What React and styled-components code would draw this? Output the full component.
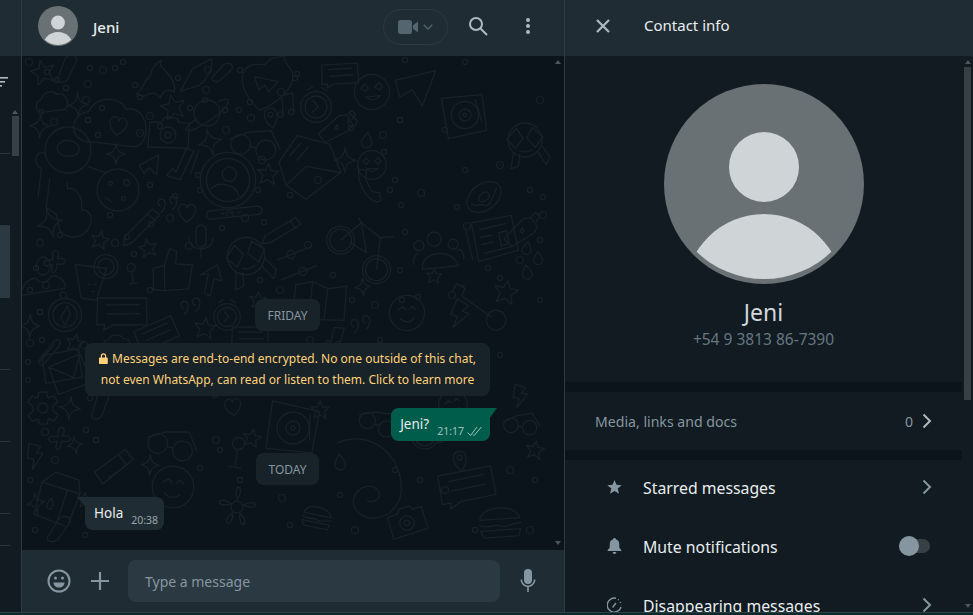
import React from 'react';
import styled, { createGlobalStyle } from 'styled-components';

const GlobalStyle = createGlobalStyle`
  html, body { margin: 0; padding: 0; background: #111b21; }
  body { font-family: "Noto Sans", "Open Sans", sans-serif; overflow: hidden; }
  * { box-sizing: border-box; }
`;

const doodleShapes = {
  star: <path d="M0-15 4-5 15-5 7 3 10 14 0 8-10 14-7 3-15-5-4-5Z" />,
  sparkle: <path d="M0-15C1-5 4-2 13 0 4 2 1 5 0 15-1 5-4 2-13 0-4-2-1-5 0-15Z" />,
  heart: <path d="M0 14C-22-2-12-16-4-13-2-12 0-10 0-8 0-10 2-12 4-13 12-16 22-2 0 14Z" />,
  wheart: <g><path d="M0 26C-30 8-28-14-14-18-8-20-4-18-2-24 4-32 8-28 14-34 12-26 20-24 24-18 30-6 20 12 0 26Z" /><path d="M-12-6H12L5 6 0 0-5 6Z" /></g>,
  drop: <path d="M0-13C6-4 9 0 9 4A9 9 0 0 1-9 4C-9 0-6-4 0-13Z" />,
  planet: <g><circle r="13" /><path d="M-11 5C-22 11-24 15-21 16-16 18 18 2 22-9 23-13 18-13 12-10" /></g>,
  camera: <g><path d="M-20-10-8-12-6-17 6-18 9-14 19-15 22 10-18 15Z" /><circle r="8" /><circle r="3" /></g>,
  clock: <g><circle r="14" /><circle r="10" /><path d="M-3-6 2 0-3 5" /><path d="M-9-15-4-18M9-15 4-18" /></g>,
  envelope: <g><path d="M-28-4-4-26 26-10 30 20-10 38-26 20Z" /><path d="M-26 20-2 6 30 20M-16-8-2-18M-10-2 4-12" /></g>,
  mail: <g><path d="M-22-16 14-20 17 8-20 12Z" /><path d="M-16-4 16-15 26 14-8 24ZM-16-4 8 8 16-15" /></g>,
  face: <g><circle r="16" /><path d="M-8-3-4-6-1-3M2-3 5-6 8-3M-6 5C-3 9 3 9 6 5" /></g>,
  hearteyes: <g><circle r="16" /><path d="M-10-4-6-8-3-4-6-1ZM3-4 7-8 10-4 7-1ZM-6 4C-2 8 3 8 7 4Z" /></g>,
  avatar: <g><circle r="23" /><circle r="18" /><circle cy="-5" r="6" /><path d="M-12 11C-8 2 8 2 12 11" /></g>,
  glasses: <g><circle cx="-11" cy="-2" r="9" /><circle cx="11" cy="6" r="9" /><path d="M-20-8-3-12 18-11 24 7M-3 1 3 3" /></g>,
  card: <g><path d="M-24-10 20-17 24 7-6 12-14 18-14 13-21 14Z" /><path d="M-15-5 14-10M-13 3 16-2" /></g>,
  cloud: <path d="M-14 8C-22 6-20-4-13-5-10-13 1-12 3-7 12-10 16 6 8 9Z" />,
  pin: <g><path d="M0 14C-12 2-9-11 0-11 9-11 12 2 0 14Z" /><circle cy="-3" r="3" /></g>,
  note: <g><path d="M-6 10V-11L6-13V8" /><circle cx="-9" cy="10" r="3" /><circle cx="3" cy="8" r="3" /></g>,
  bottle: <g><path d="M-13 22-22 14-3-10 5-12 14-3 10 5Z" /><path d="M5-12 10-18 15-15 12-8" /><path d="M-5 4-3 0-1 4-3 6Z" /></g>,
  check: <g><path d="M-18 8-11 2-8 6 6-16 13-12-5 14Z" /><path d="M6 10 18-12" /></g>,
  plane: <path d="M-12 0 10-11 7 11-1 3-7 9Z" />,
  flower: <g><path d="M0-6C-6-20 6-20 0-6M5-2C17-10 20 3 5-2M3 5C14 15 2 19 3 5M-3 5C-14 15-2 19-3 5M-5-2C-17-10-20 3-5-2" /><circle r="5" /></g>,
  bike: <g><circle cx="-20" cy="0" r="14" /><circle cx="-20" cy="0" r="11" /><circle cx="22" cy="20" r="14" /><circle cx="22" cy="20" r="11" /><path d="M-20 0-4-22-8-26M-4-22 18-12 22 20M-4-22 8 6-10 0M18-12 30-16" /></g>,
  milk: <g><path d="M-16-8-6-20 16-18 20-6 16 26-16 22Z" /><path d="M-16-8 20-6M8-6 6 24" /><path d="M-4 4C-8 10-7 14-4 14-1 14 0 10-4 4Z" /></g>,
  gear: <g><path d="M-4-16H4L5-10 11-12 15-6 10-2V3L15 7 11 13 5 11 4 16H-4L-5 11-11 13-15 7-10 3V-2L-15-6-11-12-5-10Z" /><circle r="5" /></g>,
  compass: <g><circle r="15" /><circle r="11" /><circle cy="-18" r="3" /><path d="M3-8-4 2-1 9 5 0Z" /></g>,
  news: <g><path d="M-22-17 18-23 24 12-16 22Z" /><path d="M-14-10 12-15M-13-2-2-4M-12 5-1 3M5-6 13-8 15 5 7 7ZM-10 14 18 8M-28-10-22 20" /></g>,
  record: <g><path d="M-24-24 24-20 22 22-24 24Z" /><circle r="16" /><circle r="7" /><circle r="2" /><path d="M15-16 18 10" /></g>,
  roll: <g><path d="M-20 6 16-16 24-4-12 20Z" /><path d="M8-11 16 1M-4 13 5 8" /></g>,
  burger: <g><path d="M-20-3C-18-18 16-18 20-3Z" /><path d="M-21 2C-12 7-6 1 0 4 8 7 14 1 21 2M-20 8H20L18 15H-17Z" /></g>,
  pen: <g><path d="M-16 8 12-14 18-8-10 14-18 16Z" /><path d="M7-10 14-3" /></g>,
  capsule: <path d="M-14 10-4-8C0-14 8-12 8-6L-4 12C-8 16-16 14-14 10Z" />,
  thumb: <g><path d="M-12-2-4-4 0-16 5-14 4-5 16-4 13 13-4 14-12 13Z" /><path d="M-4-4V14" /></g>,
  phone: <path d="M-10-16-3-14-5-6-1 6 6 8 6 15C-2 20-14 0-10-16Z" />,
  swirl: <path d="M-16-26C6-30 24-10 18 14 14 30-6 34-14 22-20 10-4 2 2 10 6 16-2 20-6 16" />,
  mic: <g><path d="M-5-10A5 5 0 0 1 5-10V2A5 5 0 0 1-5 2Z" /><path d="M-12-1C-11 12 11 12 12-1M0 9V17" /></g>,
  hands: <g><circle r="17" /><path d="M-18-2-8-12-2-2-10 8ZM18-2 8-12 2-2 10 8ZM-6 10C0 14 6 10 6 10M-12 12-16 28-8 26-6 14M12 12 20 26 24 18 16 6" /></g>,
  band: <g><path d="M-26 4 20-8C26-9 28-2 22 0L-24 12C-29 13-30 6-26 4Z" /><path d="M-14 5-11 4M-6 3-3 2M2 1 5 0" /></g>,
  sliders: <g><path d="M-18-6 18-16M-16 14 20 4" /><circle cx="-4" cy="-10" r="4" /><circle cx="6" cy="8" r="4" /></g>,
  people: <g><path d="M-16 16C-16-2 16-2 20 18Z" /><circle cy="-12" r="7" /><circle cx="-16" cy="-8" r="5" /><circle cx="18" cy="-4" r="5" /><path d="M-24 10C-24 2-20 0-18 0M26 12C28 4 24 2 22 2" /></g>,
  donut: <g><ellipse rx="19" ry="13" transform="rotate(-25)" /><ellipse rx="6" ry="4" transform="rotate(-25)" /><path d="M-14 4C-8 10-6 4-2 8 4 12 8 2 14-6" /></g>,
  guitar: <g><path d="M-20-16-14-22-8-16-12-10 10 14" /><circle cx="14" cy="18" r="9" /><path d="M-12-20-8-18" /></g>,
  map: <g><path d="M-24-8-8-14 8-10 26-16 30 18-6 24-22 22Z" /><path d="M-8-14-6 24M8-10 10 20" /></g>,
  drink: <g><path d="M-15-16 14-4-4 24-18 18Z" /><circle cx="14" cy="-6" r="12" /><circle cx="14" cy="-6" r="8" /><path d="M-8 6-6 7M-2 8 0 9M-6 14-4 15" /></g>,
  person: <g><ellipse cy="-14" rx="7" ry="9" /><path d="M-22 16C-20 2-14 0-8-2-2 4 4 4 8-4 16-6 24 2 22 8Z" /></g>,
  arrow: <path d="M-4 16-2-4-10-2 6-14 12 2 4 0 2 18Z" />,
  helmet: <g><circle r="23" /><path d="M-11-2C-10-12 10-12 11-2 12 8-12 10-11-2Z" /><path d="M-23 6C-32 4-34 18-24 22V50M22 14 40 18" /></g>,
  glove: <path d="M-20-20-18 6-8 10-2 24C8 32 22 26 24 14 26 4 18 0 14 2 12-14 2-18-2-14L-4-20" />,
  cookie: <g><circle r="21" /><circle cx="-8" cy="-6" r="2" /><circle cx="8" cy="-8" r="3" /><circle cx="6" cy="8" r="2" /><path d="M-12 8-6 12" /></g>,
  quote: <path d="M-7 3C-11 0-8-6-4-4 0-2-2 6-7 9M5 1C1-2 4-8 8-6 12-4 10 4 5 7" />,
  bolt: <path d="M-4-14 8-8 2-2 9 0-6 15-2 4-9 2Z" />,
  clip: <path d="M-15 10 10-12C16-15 20-9 15-5L-8 14C-12 16-15 13-12 10L10-8" />,
  flame: <path d="M-22 14C-14 8-14 0-8-4-6-10-4-16 4-20 0-14 6-12 10-6 14-2 18 6 16 12 8 8 4 12 2 18-2 12-8 12-14 16Z" />,
  kite: <path d="M-14 18-4-6 14-18C16-10 12 4 4 10Z" />,
  cross: <path d="M-2-14C2-16 3-10 2-5 8-8 14-4 10-1 8 1 4 0 2 1 4 8 0 13-2 10-4 8-2 4-3 2-8 6-14 4-12 0-10-3-6-3-3-3-4-8-5-12-2-14Z" />,
  stem: <g><circle cy="-8" r="5" /><path d="M0-3V10M-5 12H5" /></g>,
};

// absolute page coordinates, as read off the picture
const doodles = [
  ['star', 43, 72, .8], ['capsule', 70, 67, 1], ['flame', 158, 80, 1], ['kite', 196, 75, 1], ['capsule', 225, 72, .8],
  ['cloud', 55, 102, 1], ['sparkle', 78, 105, .8], ['cloud', 118, 125, 2.3], ['heart', 118, 126, .65], ['star', 173, 107, .8],
  ['planet', 207, 113, 1], ['sparkle', 40, 126, .8], ['camera', 168, 135, 1], ['sparkle', 210, 142, .9], ['glasses', 253, 145, 1.1],
  ['sparkle', 116, 154, .7], ['helmet', 68, 150, 1], ['avatar', 228, 180, 1.2], ['check', 183, 165, 1], ['plane', 150, 165, .9],
  ['star', 268, 174, .7], ['wheart', 265, 85, 1], ['pin', 271, 117, .8], ['note', 288, 105, .9], ['clock', 316, 107, 1.1],
  ['bottle', 340, 125, .9], ['envelope', 307, 160, 1], ['hearteyes', 372, 92, 1.1], ['sparkle', 345, 160, .85], ['drop', 367, 140, .6],
  ['drop', 352, 120, .5], ['phone', 372, 185, 1.1], ['hearteyes', 372, 165, .9], ['card', 340, 75, .8], ['plane', 415, 85, 1.7],
  ['record', 465, 115, .85], ['hands', 525, 140, 1], ['cookie', 118, 190, 1], ['glove', 67, 205, 1.1], ['donut', 484, 197, 1],
  ['quote', 167, 203, 1], ['heart', 187, 213, .65], ['band', 236, 211, 1], ['sparkle', 50, 223, 1], ['pen', 141, 226, 1.1],
  ['mic', 201, 240, 1], ['pen', 282, 230, 1], ['bike', 360, 245, 1], ['people', 436, 251, 1], ['news', 494, 239, 1], ['bottle', 525, 228, .9],
  ['star', 100, 240, .6], ['star', 148, 248, .6], ['sparkle', 363, 287, .6], ['star', 434, 276, .5], ['star', 506, 292, .8],
  ['hands', 246, 256, 1.1], ['sliders', 296, 264, 1], ['person', 43, 280, 1], ['cross', 55, 263, .9], ['drink', 94, 276, 1],
  ['stem', 132, 274, .8], ['thumb', 170, 271, 1.4], ['arrow', 210, 278, 1], ['drop', 527, 248, .5], ['drop', 527, 272, .55],
  ['drop', 538, 258, .5], ['star', 258, 300, .55], ['map', 318, 297, 1], ['guitar', 477, 304, 1.1], ['compass', 65, 315, 1.1],
  ['sparkle', 30, 326, .8], ['card', 122, 313, 1.1], ['card', 157, 335, .9], ['quote', 190, 305, 1], ['clock', 227, 317, .95],
  ['star', 205, 328, .7], ['note', 337, 337, .8], ['quote', 360, 323, 1], ['face', 407, 313, 1.1], ['bolt', 460, 313, 1],
  ['star', 75, 343, .6], ['clip', 48, 352, .8], ['mail', 65, 370, 1], ['cloud', 120, 345, .9], ['card', 250, 338, .8],
  ['capsule', 103, 403, 1], ['heart', 233, 407, .6], ['star', 320, 410, .6], ['record', 293, 428, 1], ['face', 453, 405, .9],
  ['bolt', 520, 395, .8], ['gear', 43, 408, 1], ['sparkle', 70, 408, .8], ['cross', 60, 440, .9], ['sparkle', 75, 445, .6],
  ['glasses', 170, 445, 1.1], ['glasses', 377, 423, .9], ['star', 252, 438, .6], ['bolt', 35, 455, .9], ['roll', 112, 465, .9],
  ['sparkle', 150, 465, .7], ['stem', 237, 453, 1.2], ['swirl', 370, 475, 1.5], ['pin', 460, 460, .8], ['star', 85, 500, .5],
  ['face', 173, 487, 1.3], ['milk', 57, 495, 1.1], ['sparkle', 36, 503, .7], ['card', 467, 487, 1.2], ['flower', 237, 507, 1.2],
  ['burger', 317, 517, .7], ['camera', 407, 523, .9], ['burger', 500, 522, 1], ['capsule', 62, 528, 1], ['star', 535, 450, .6],
  ['glasses', 520, 425, .8], ['drop', 340, 462, .6], ['avatar', 425, 435, .6],
];

const dots = [
  [29, 62], [47, 72], [90, 68], [103, 70], [115, 68], [123, 62], [88, 84], [57, 80], [66, 88], [86, 100], [135, 85], [140, 97], [150, 116],
  [178, 78], [205, 100], [206, 90], [225, 110], [240, 70], [251, 118], [102, 108], [41, 112], [54, 122], [88, 120], [98, 135],
  [140, 133], [160, 126], [190, 108], [226, 130], [239, 110], [297, 74], [281, 92], [295, 78], [250, 102], [208, 70], [198, 175], [200, 190],
  [262, 160], [258, 190], [290, 195], [318, 180], [351, 128], [384, 152], [383, 135], [395, 180], [150, 185], [170, 218], [110, 215], [60, 235],
  [40, 243], [36, 268], [30, 290], [46, 285], [40, 312], [28, 380], [30, 343], [42, 340], [28, 362], [84, 345], [90, 398], [86, 430], [45, 432],
  [96, 440], [30, 480], [55, 460], [35, 530], [85, 535], [150, 520], [200, 468], [220, 450], [216, 440], [240, 480], [270, 460], [282, 498],
  [290, 525], [340, 495], [355, 530], [395, 470], [420, 480], [445, 490], [440, 440], [460, 420], [510, 470], [535, 480], [475, 530], [530, 530],
  [540, 300], [500, 355], [420, 355], [380, 340], [350, 350], [310, 340], [215, 395], [150, 290], [280, 290], [260, 280], [400, 270], [520, 260],
  [540, 240], [465, 170], [500, 165], [405, 60], [465, 62], [540, 100], [445, 130], [400, 120], [245, 218], [264, 222], [222, 228], [230, 214],
  [151, 224], [175, 196], [189, 246], [127, 237], [134, 254], [115, 243], [405, 232], [401, 205], [421, 193], [390, 190], [457, 207], [467, 226],
  [530, 190], [543, 197], [543, 215], [500, 278], [488, 268], [452, 295], [418, 297], [402, 300], [375, 305], [352, 300], [333, 275], [308, 245],
];

const Shell = styled.div`
  width: 973px;
  height: 615px;
  display: flex;
  flex-direction: column;
  overflow: hidden;
  background: #111b21;
`;

const Columns = styled.div`
  flex: 1;
  min-height: 0;
  display: grid;
  grid-template-columns: 22px 543px 408px;
`;

const BottomStrip = styled.div`
  height: 3px;
  background: #0c2a2c;
  border-top: 1px solid #2b4143;
`;

const Sidebar = styled.aside`
  position: relative;
  display: flex;
  flex-direction: column;
  border-right: 1px solid #2f3b43;
  background: #111b21;
`;

const SideHeader = styled.div`
  height: 56px;
  flex: none;
  background: #202c33;
`;

const FilterBar = styled.div`
  height: 26px;
  flex: none;
  padding-top: 21px;
  color: #aebac1;
  svg { display: block; }
`;

const SideRow = styled.div`
  width: 10px;
  flex: none;
  height: ${p => p.$short ? '32px' : '72px'};
  background: ${p => p.$active ? '#2a3942' : 'transparent'};
  border-bottom: 1px solid ${p => p.$active ? 'transparent' : '#2a343b'};
`;

const ScrollArrow = styled.span`
  position: absolute;
  left: ${p => p.$left}px;
  top: ${p => p.$top}px;
  width: 0;
  height: 0;
  border-left: 3px solid transparent;
  border-right: 3px solid transparent;
  ${p => p.$down ? 'border-top: 4px solid #4c565c;' : 'border-bottom: 4px solid #4c565c;'}
`;

const ScrollThumb = styled.span`
  position: absolute;
  left: ${p => p.$left}px;
  top: ${p => p.$top}px;
  width: ${p => p.$width}px;
  height: ${p => p.$height}px;
  background: #374045;
`;

const Chat = styled.main`
  position: relative;
  display: flex;
  flex-direction: column;
  min-height: 0;
  border-right: 1px solid #2f3b43;
  background: #0b141a;
`;

const ChatHeader = styled.header`
  height: 56px;
  flex: none;
  display: flex;
  align-items: center;
  padding: 0 24px 4px 16px;
  background: #202c33;
  color: #aebac1;
  position: relative;
  z-index: 1;
`;

const HeaderName = styled.div`
  flex: 1;
  margin-left: 15px;
  margin-top: 2px;
  color: #e9edef;
  font-size: 15px;
  font-weight: 500;
`;

const AvatarWrap = styled.div`
  width: ${p => p.$size}px;
  height: ${p => p.$size}px;
  flex: none;
  svg { display: block; }
`;

const CallPill = styled.div`
  width: 65px;
  height: 36px;
  margin-right: 18px;
  margin-top: 2px;
  display: flex;
  align-items: center;
  justify-content: center;
  gap: 5px;
  border: 1px solid #2a3942;
  border-radius: 18px;
  color: #54656f;
`;

const IconBtn = styled.div`
  width: ${p => p.$width || 24}px;
  height: 24px;
  margin-left: ${p => p.$gap || 0}px;
  display: flex;
  align-items: center;
  justify-content: center;
  color: ${p => p.$color || '#aebac1'};
  flex: none;
`;

const DoodleSlot = styled.div`
  position: absolute;
  inset: 56px 0 62px 0;
  overflow: hidden;
`;

const Messages = styled.div`
  position: relative;
  flex: 1;
  min-height: 0;
  display: flex;
  flex-direction: column;
  justify-content: flex-end;
  gap: 12px;
  padding: 0 74px 20px 63px;
`;

const DayChip = styled.div`
  align-self: center;
  height: 32px;
  padding: 0 12px;
  display: flex;
  align-items: center;
  border-radius: 7.5px;
  background: #182229;
  color: #8696a0;
  font-size: 12px;
`;

const Notice = styled.div`
  height: 53px;
  padding: 5px 10px 0;
  border-radius: 7.5px;
  background: #182229;
  color: #ffd279;
  font-size: 12px;
  line-height: 21px;
  text-align: center;
  svg { vertical-align: -1px; margin-right: 4px; }
`;

const Bubble = styled.div`
  position: relative;
  height: 33px;
  padding: 0 ${p => p.$out ? '7px' : '6px'} 0 9px;
  display: flex;
  align-self: ${p => p.$out ? 'flex-end' : 'flex-start'};
  border-radius: 7.5px;
  border-top-${p => p.$out ? 'right' : 'left'}-radius: 0;
  background: ${p => p.$out ? '#005c4b' : '#202c33'};
  color: #e9edef;
  font-size: 13.5px;
  line-height: 32px;
  &::after {
    content: '';
    position: absolute;
    top: 0;
    ${p => p.$out ? 'right: -7px;' : 'left: -7px;'}
    width: 8px;
    height: 11px;
    background: inherit;
    clip-path: ${p => p.$out ? 'polygon(0 0, 100% 0, 0 100%)' : 'polygon(0 0, 100% 0, 100% 100%)'};
  }
`;

const BubbleTime = styled.span`
  margin-left: 8px;
  margin-top: 14px;
  display: flex;
  align-items: center;
  gap: 3px;
  height: 18px;
  color: ${p => p.$out ? '#9fc4bc' : '#98a4ab'};
  font-size: 10.5px;
  line-height: 18px;
`;

const Composer = styled.footer`
  height: 62px;
  flex: none;
  display: flex;
  align-items: center;
  padding: 0 24px 0 25px;
  background: #202c33;
  position: relative;
`;

const MessageInput = styled.div`
  flex: 1;
  height: 42px;
  margin: 0 16px;
  padding-left: 17px;
  display: flex;
  align-items: center;
  border-radius: 8px;
  background: #2a3942;
  color: #8696a0;
  font-size: 14px;
`;

const Panel = styled.section`
  position: relative;
  min-height: 0;
  overflow: hidden;
  background: #111b21;
`;

const PanelHeader = styled.header`
  height: 56px;
  padding-left: 31px;
  display: flex;
  align-items: center;
  background: #202c33;
  color: #e9edef;
  font-size: 15px;
  span { margin-left: 34px; margin-top: -6px; }
  svg { margin-top: -4px; }
`;

const PanelBody = styled.div`
  width: 397px;
  display: flex;
  flex-direction: column;
  gap: 10px;
  background: #0b141a;
`;

const ProfileCard = styled.div`
  height: 326px;
  padding-top: 28px;
  display: flex;
  flex-direction: column;
  align-items: center;
  background: #111b21;
`;

const ContactName = styled.div`
  margin-top: 13px;
  color: #d1d7db;
  font-size: 23px;
  line-height: 30px;
`;

const ContactPhone = styled.div`
  margin-top: 1px;
  color: #667781;
  font-size: 15.5px;
  line-height: 22px;
`;

const MediaRow = styled.div`
  height: 58px;
  padding: 0 30px;
  display: flex;
  align-items: center;
  background: #111b21;
  color: #8696a0;
  font-size: 14.1px;
  span:first-child { flex: 1; }
  span:nth-child(2) { margin-right: 9px; }
`;

const OptionList = styled.div`
  background: #111b21;
  height: 160px;
`;

const OptionRow = styled.div`
  height: 59px;
  padding: 0 30px 5px 42px;
  display: flex;
  align-items: center;
  color: #e9edef;
  font-size: 15.8px;
  span { flex: 1; margin-left: 21px; margin-top: 2px; }
`;

const Toggle = styled.div`
  position: relative;
  width: 31px;
  height: 14px;
  margin-right: 2px;
  border-radius: 7px;
  background: #374045;
  &::before {
    content: '';
    position: absolute;
    left: 0;
    top: -3px;
    width: 20px;
    height: 20px;
    border-radius: 50%;
    background: #8696a0;
  }
`;

const DefaultAvatar = ({ size }) => (
  <AvatarWrap $size={size}>
    <svg width={size} height={size} viewBox="0 0 200 200">
      <defs><clipPath id={`av${size}`}><circle cx="100" cy="98" r="97" /></clipPath></defs>
      <circle cx="100" cy="100" r="100" fill="#6a7175" />
      <circle cx="100" cy="83" r="35" fill="#cfd4d6" />
      <circle cx="100" cy="209" r="79" fill="#cfd4d6" clipPath={`url(#av${size})`} />
    </svg>
  </AvatarWrap>
);

const Chevron = ({ color = '#8696a0' }) => (
  <svg width="10" height="16" viewBox="0 0 10 16" fill="none" stroke={color} strokeWidth="2"><path d="M1.5 1.5 8 8l-6.5 6.500" /></svg>
);

const Doodles = () => (
  <svg width="542" height="556" viewBox="22 56 542 556" fill="none" stroke="#172128" strokeLinejoin="round" strokeLinecap="round">
    {doodles.map(([type, x, y, s], i) => (
      <g key={i} transform={`translate(${x} ${y}) rotate(${(i * 37) % 30 - 15}) scale(${s})`} strokeWidth={1.3 / s}>
        {doodleShapes[type]}
      </g>
    ))}
    {dots.map(([x, y], i) => <circle key={i} cx={x} cy={y} r={i % 3 === 0 ? 3.5 : 2.6} strokeWidth="1.2" />)}
  </svg>
);

export default function App() {
  return (
    <Shell>
      <GlobalStyle />
      <Columns>
        <Sidebar>
          <SideHeader />
          <FilterBar>
            <svg width="8" height="10" viewBox="0 0 8 10" fill="currentColor"><rect x="-1" width="9" height="1.6" /><rect x="-1" y="4" width="6" height="1.6" /><rect x="-1" y="8" width="3" height="1.6" /></svg>
          </FilterBar>
          <SideRow />
          <SideRow />
          <SideRow $active />
          <SideRow />
          <SideRow />
          <SideRow />
          <SideRow $short />
          <ScrollArrow $left={12} $top={110} />
          <ScrollThumb $left={12} $top={116} $width={7} $height={40} />
        </Sidebar>

        <Chat>
          <ChatHeader>
            <DefaultAvatar size={40} />
            <HeaderName>Jeni</HeaderName>
            <CallPill>
              <svg width="20" height="14" viewBox="0 0 20 14" fill="currentColor"><rect width="14" height="14" rx="2.500" /><path d="M15 5.200 20 1.500v11L15 8.800Z" /></svg>
              <svg width="10" height="6" viewBox="0 0 10 6" fill="none" stroke="currentColor" strokeWidth="1.300"><path d="M.7.7 5 5 9.300.7" /></svg>
            </CallPill>
            <IconBtn>
              <svg width="20" height="20" viewBox="0 0 20 20" fill="none" stroke="currentColor" strokeWidth="2"><circle cx="8" cy="8" r="6" /><path d="M12.500 12.500 19 19" /></svg>
            </IconBtn>
            <IconBtn $gap={26}>
              <svg width="6" height="18" viewBox="0 0 6 18" fill="currentColor"><circle cx="3" cy="3" r="2" /><circle cx="3" cy="9" r="2" /><circle cx="3" cy="15" r="2" /></svg>
            </IconBtn>
          </ChatHeader>
          <DoodleSlot><Doodles /></DoodleSlot>
          <Messages>
            <DayChip>FRIDAY</DayChip>
            <Notice>
              <svg width="9" height="11" viewBox="0 0 9 11" fill="currentColor"><path d="M1.800 4.500V3a2.700 2.700 0 0 1 5.400 0v1.500h.6c.6 0 1 .4 1 1V10c0 .6-.4 1-1 1H1c-.6 0-1-.4-1-1V5.500c0-.6.4-1 1-1ZM3 4.500h3V3a1.500 1.500 0 0 0-3 0Z" /></svg>
              Messages are end-to-end encrypted. No one outside of this chat, not even WhatsApp, can read or listen to them. Click to learn more
            </Notice>
            <Bubble $out>
              Jeni?
              <BubbleTime $out>
                21:17
                <svg width="16" height="11" viewBox="0 0 16 11" fill="none" stroke="currentColor" strokeWidth="1"><path d="M.7 6.500 3.500 9.500 10 1M6 8.500 7 9.500 14.500 1" /></svg>
              </BubbleTime>
            </Bubble>
            <DayChip>TODAY</DayChip>
            <Bubble>
              Hola
              <BubbleTime>20:38</BubbleTime>
            </Bubble>
          </Messages>
          <Composer>
            <IconBtn $color="#8696a0">
              <svg width="24" height="24" viewBox="0 0 24 24" fill="none" stroke="currentColor" strokeWidth="2"><circle cx="12" cy="12" r="10.500" /><circle cx="8.500" cy="9" r="1.500" fill="currentColor" stroke="none" /><circle cx="15.500" cy="9" r="1.500" fill="currentColor" stroke="none" /><path d="M6.500 13.500h11c0 3-2.500 5-5.500 5s-5.500-2-5.500-5Z" fill="currentColor" stroke="none" /></svg>
            </IconBtn>
            <IconBtn $gap={17} $color="#8696a0">
              <svg width="18" height="18" viewBox="0 0 18 18" fill="none" stroke="currentColor" strokeWidth="2.200"><path d="M9 0v18M0 9h18" /></svg>
            </IconBtn>
            <MessageInput>Type a message</MessageInput>
            <IconBtn $width={24} $color="#8696a0">
              <svg width="18" height="24" viewBox="0 0 18 24" fill="currentColor"><rect x="5" y="0" width="8" height="15" rx="4" /><path d="M1.500 10.500h1.600c.2 3.500 2.800 6 5.900 6s5.700-2.500 5.900-6h1.600c-.2 4-3 7-6.700 7.500V23h-1.600v-5c-3.700-.5-6.500-3.500-6.700-7.500Z" /></svg>
            </IconBtn>
          </Composer>
          <ScrollArrow $left={533} $top={60} />
          <ScrollArrow $left={533} $top={541} $down />
        </Chat>

        <Panel>
          <PanelHeader>
            <svg width="14" height="14" viewBox="0 0 14 14" fill="none" stroke="#aebac1" strokeWidth="2.200"><path d="M1 1l12 12M13 1 1 13" /></svg>
            <span>Contact info</span>
          </PanelHeader>
          <PanelBody>
            <ProfileCard>
              <DefaultAvatar size={200} />
              <ContactName>Jeni</ContactName>
              <ContactPhone>+54 9 3813 86-7390</ContactPhone>
            </ProfileCard>
            <MediaRow>
              <span>Media, links and docs</span>
              <span>0</span>
              <Chevron color="#aebac1" />
            </MediaRow>
            <OptionList>
              <OptionRow>
                <svg width="15" height="14" viewBox="0 0 15 14" fill="#8696a0"><path d="M7.500 0 9.500 4.800 14.700 5.200 10.700 8.500 12 13.700 7.500 10.900 3 13.700 4.300 8.500.3 5.200 5.500 4.800Z" /></svg>
                <span>Starred messages</span>
                <Chevron />
              </OptionRow>
              <OptionRow>
                <svg width="15" height="16" viewBox="0 0 15 16" fill="#8696a0"><path d="M7.500 0c.8 0 1.200.5 1.300 1.200 2.300.6 3.500 2.500 3.500 5v3.500l2 2.300v1H.7v-1l2-2.300V6.200c0-2.500 1.200-4.400 3.500-5C6.300.5 6.700 0 7.500 0ZM5.700 14h3.600c0 1.100-.8 2-1.800 2s-1.800-.9-1.800-2Z" /></svg>
                <span>Mute notifications</span>
                <Toggle />
              </OptionRow>
              <OptionRow>
                <svg width="15" height="16" viewBox="0 0 15 16" fill="none" stroke="#8696a0" strokeWidth="1.400"><path d="M9 1.300A7 7 0 1 0 14 10" /><path d="M11 2.500 11.800 3M13.200 5 13.600 6M14.200 8h.2" /><path d="M5.500 10.500 9 6" /></svg>
                <span>Disappearing messages</span>
                <Chevron />
              </OptionRow>
            </OptionList>
          </PanelBody>
          <ScrollArrow $left={400} $top={60} />
          <ScrollThumb $left={399} $top={67} $width={7} $height={333} />
          <ScrollArrow $left={400} $top={604} $down />
        </Panel>
      </Columns>
      <BottomStrip />
    </Shell>
  );
}
